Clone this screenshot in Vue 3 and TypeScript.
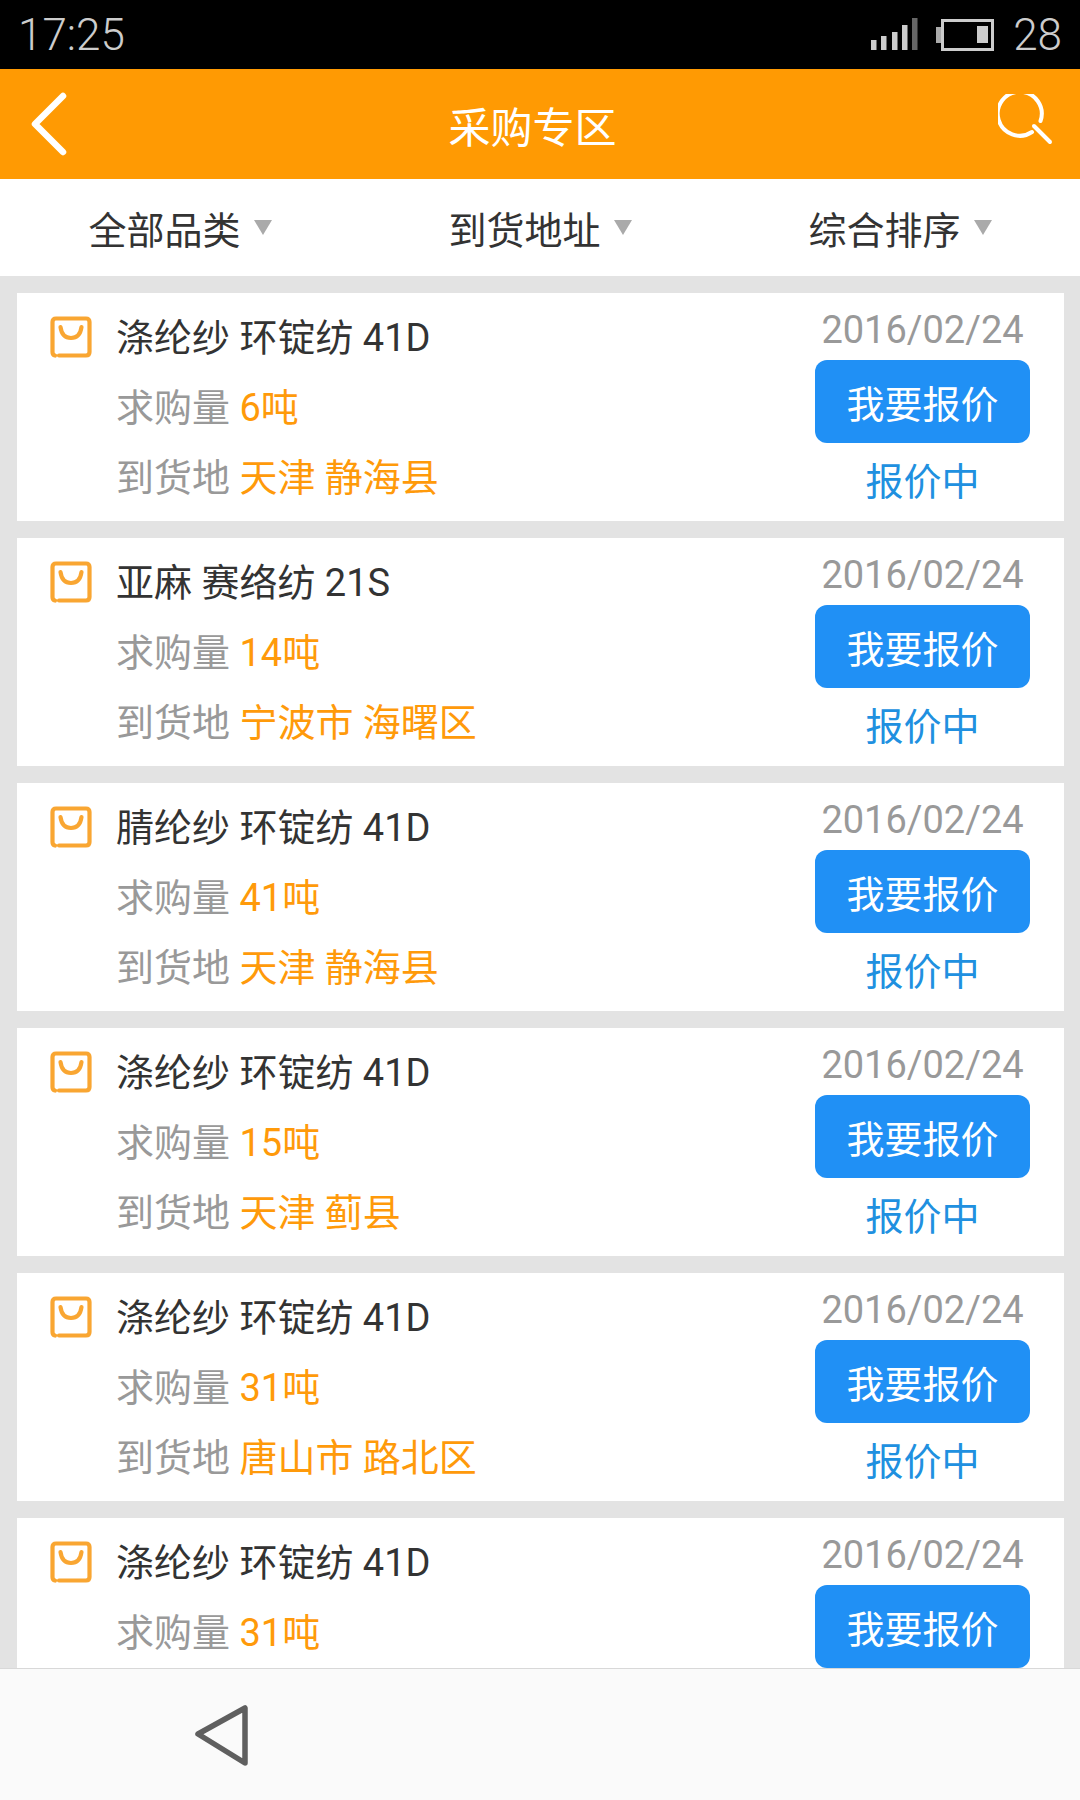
<template>
  <div class="page">
    <div class="status-bar">
      <span class="time">17:25</span>
      <div class="status-right">
        <svg class="signal" width="48" height="34" viewBox="0 0 48 34">
          <rect x="0" y="22" width="5.5" height="10" fill="#ccc" />
          <rect x="10" y="18" width="5.5" height="14" fill="#ccc" />
          <rect x="21" y="14" width="5.5" height="18" fill="#ccc" />
          <rect x="31" y="7" width="5.5" height="25" fill="#ccc" />
          <rect x="41" y="0" width="5.5" height="32" fill="#666" />
        </svg>
        <svg class="battery" width="58" height="32" viewBox="0 0 58 32">
          <rect x="0" y="8" width="5" height="16" fill="#aaa" />
          <rect x="6.5" y="1.5" width="50" height="29" fill="none" stroke="#ccc" stroke-width="3" />
          <rect x="41" y="7" width="11" height="17" fill="#ccc" />
        </svg>
        <span class="battery-num">28</span>
      </div>
    </div>

    <div class="header">
      <svg class="back" width="36" height="64" viewBox="0 0 36 64">
        <path d="M32 4 L4 32 L32 60" fill="none" stroke="#fff" stroke-width="6.5" stroke-linecap="round" stroke-linejoin="round" />
      </svg>
      <span class="title">采购专区</span>
      <svg class="search" width="60" height="60" viewBox="0 0 60 60">
        <path d="M34 38 A22 22 0 1 1 42.5 27" fill="none" stroke="#fff" stroke-width="4" stroke-linecap="round" />
        <path d="M36 32 L52 48" fill="none" stroke="#fff" stroke-width="4" stroke-linecap="round" />
      </svg>
    </div>

    <div class="filters">
      <div v-for="f in filters" :key="f" class="filter">
        <span>{{ f }}</span>
        <i class="caret"></i>
      </div>
    </div>

    <div class="list">
      <div v-for="(item, i) in items" :key="i" class="card">
        <svg class="bag" width="42" height="42" viewBox="0 0 42 42">
          <path d="M9 39.5 H36 Q39.5 39.5 39.5 36 V6 Q39.5 2.5 36 2.5 H6 Q2.5 2.5 2.5 6 V36 Q2.5 39 5 39.5" fill="none" stroke="#f9a632" stroke-width="4.2" stroke-linecap="round" />
          <path d="M10.5 11 Q12 22 21 22 Q30 22 31.5 11" fill="none" stroke="#f9a632" stroke-width="4.2" stroke-linecap="round" />
        </svg>
        <div class="info">
          <div class="name">{{ item.name }}</div>
          <div class="row">求购量 <em>{{ item.qty }}</em></div>
          <div class="row">到货地 <em>{{ item.addr }}</em></div>
        </div>
        <div class="side">
          <div class="date">2016/02/24</div>
          <button class="quote">我要报价</button>
          <div class="state">报价中</div>
        </div>
      </div>
    </div>

    <div class="nav">
      <svg class="nav-back" width="56" height="64" viewBox="0 0 56 64">
        <path d="M3 29 L50 3 V58 Z" fill="none" stroke="#5f5f5f" stroke-width="5.5" stroke-linejoin="round" />
      </svg>
    </div>
  </div>
</template>

<script setup lang="ts">
interface Item {
  name: string
  qty: string
  addr: string
}

const filters = ['全部品类', '到货地址', '综合排序']

const items: Item[] = [
  { name: '涤纶纱 环锭纺 41D', qty: '6吨', addr: '天津 静海县' },
  { name: '亚麻 赛络纺 21S', qty: '14吨', addr: '宁波市 海曙区' },
  { name: '腈纶纱 环锭纺 41D', qty: '41吨', addr: '天津 静海县' },
  { name: '涤纶纱 环锭纺 41D', qty: '15吨', addr: '天津 蓟县' },
  { name: '涤纶纱 环锭纺 41D', qty: '31吨', addr: '唐山市 路北区' },
  { name: '涤纶纱 环锭纺 41D', qty: '31吨', addr: '唐山市 路北区' },
]
</script>

<style>
body {
  background: #fff;
}
</style>

<style scoped>
.page {
  width: 1080px;
  height: 1800px;
  display: flex;
  flex-direction: column;
  overflow: hidden;
  background: #e3e3e3;
  font-family: Roboto, "Noto Sans CJK SC", sans-serif;
  font-size: 38px;
}
.status-bar {
  flex: none;
  height: 69px;
  background: #000;
  color: #ccc;
  display: flex;
  justify-content: space-between;
  align-items: center;
  padding: 0 18px;
  font-size: 44px;
  font-weight: 300;
}
.status-right {
  display: flex;
  align-items: center;
}
.signal {
  margin-right: 17px;
}
.battery {
  margin-right: 19px;
}
.header {
  flex: none;
  height: 110px;
  background: #ff9a03;
  display: flex;
  justify-content: space-between;
  align-items: center;
  padding: 0 22px 0 31px;
}
.title {
  color: #fff;
  font-size: 42px;
}
.filters {
  flex: none;
  height: 97px;
  background: #fff;
  display: grid;
  grid-template-columns: repeat(3, 1fr);
}
.filter {
  display: flex;
  justify-content: center;
  align-items: center;
  gap: 13px;
  color: #333;
  font-size: 38px;
}
.caret {
  width: 0;
  height: 0;
  border-left: 9px solid transparent;
  border-right: 9px solid transparent;
  border-top: 15px solid #aaa;
}
.list {
  flex: 1;
  min-height: 0;
  overflow: hidden;
  padding: 17px 16px 0 17px;
}
.card {
  height: 228px;
  margin-bottom: 17px;
  background: #fff;
  display: flex;
  padding: 10px 34px 0 33px;
  box-sizing: border-box;
}
.bag {
  flex: none;
  margin-top: 13px;
  margin-right: 24px;
}
.info {
  flex: 1;
  min-width: 0;
}
.name,
.row {
  height: 70px;
  line-height: 70px;
  white-space: nowrap;
}
.name {
  color: #333;
}
.row {
  color: #999;
}
.row em {
  font-style: normal;
  color: #ff9a0a;
}
.side {
  flex: none;
  width: 215px;
  display: flex;
  flex-direction: column;
  align-items: center;
}
.date {
  height: 62px;
  line-height: 54px;
  color: #999;
}
.quote {
  display: block;
  width: 215px;
  height: 83px;
  flex: none;
  border: none;
  border-radius: 12px;
  background: #2090f5;
  color: #fff;
  font: inherit;
  padding: 0;
}
.state {
  line-height: 78px;
  color: #2090e0;
}
.nav {
  flex: none;
  height: 132px;
  box-sizing: border-box;
  background: #fafafa;
  border-top: 1px solid #d8d8d8;
  display: flex;
  align-items: flex-start;
  padding: 36px 0 0 195px;
}
</style>
